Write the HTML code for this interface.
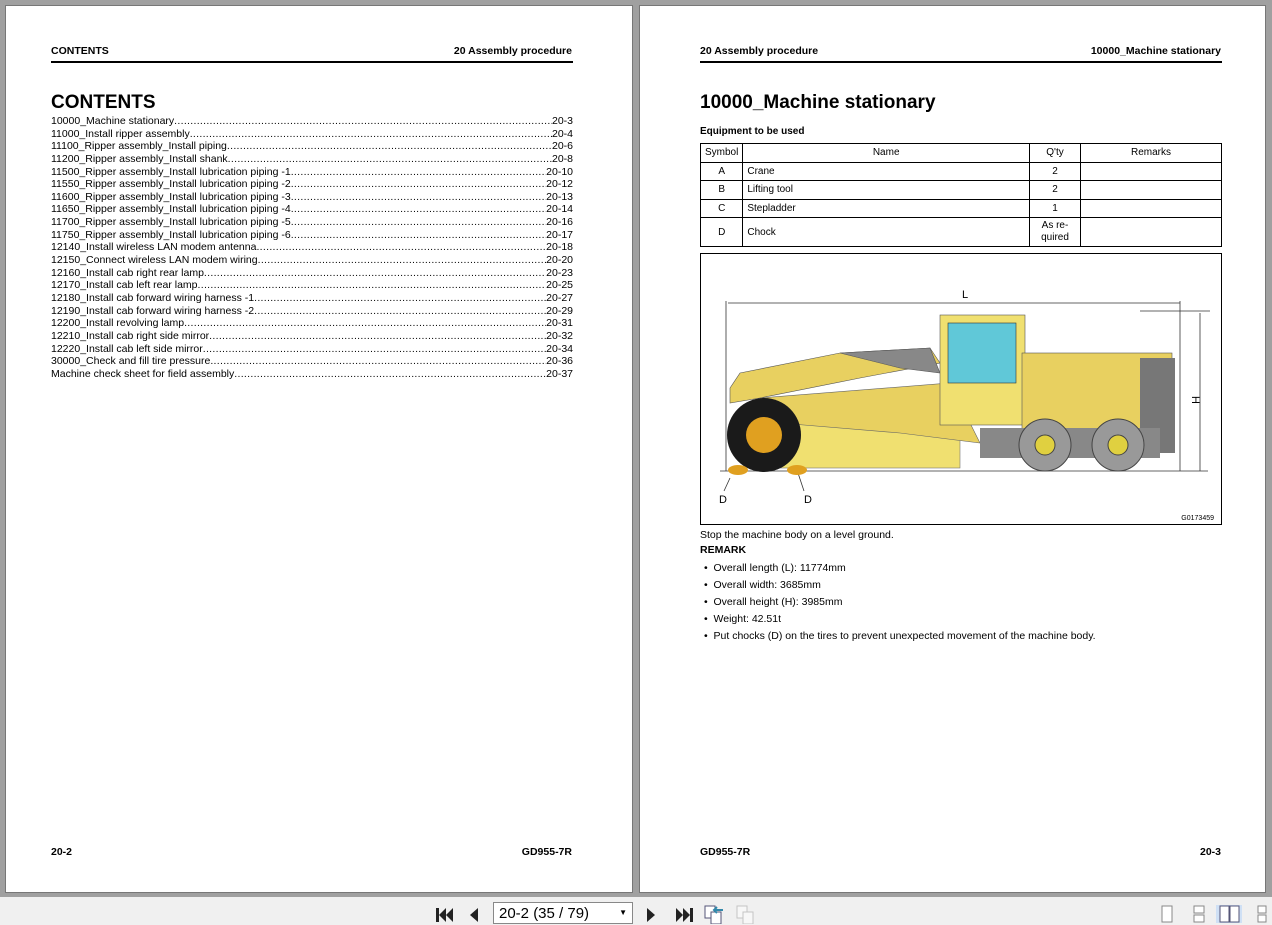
<!DOCTYPE html>
<html><head><style>
*{margin:0;padding:0;box-sizing:border-box}
body{width:1272px;height:925px;background:#a0a0a0;font-family:"Liberation Sans",sans-serif;position:relative;overflow:hidden;color:#000}
.page{position:absolute;top:5px;height:888px;background:#fff;border:1px solid #777}
.hdr{position:absolute;top:39px;font-size:10.5px;font-weight:bold}
.rule{position:absolute;top:55px;height:2px;background:#000}
.toc{position:absolute;left:45px;top:109px;width:522px;font-size:10.5px}
.toc div{display:flex;height:12.65px;line-height:12.65px;white-space:nowrap;overflow:hidden}
.toc .d{flex:1;overflow:hidden;letter-spacing:0.3px}
.toc .d:after{content:"......................................................................................................................................................................................................................................"}
table{border-collapse:collapse;font-size:10px}
td{border:1px solid #000;padding:0 4px;height:18.5px}
.tb{position:absolute;left:0;top:897px;width:1272px;height:28px;background:#f0f0f0}
</style></head><body>
<div class="page" style="left:5px;width:628px">
<div class="hdr" style="left:45px">CONTENTS</div>
<div class="hdr" style="right:60px">20 Assembly procedure</div>
<div class="rule" style="left:45px;width:522px"></div>
<div style="position:absolute;left:45px;top:86px;font-size:19px;font-weight:bold">CONTENTS</div>
<div class="toc">
<div><span>10000_Machine stationary</span><span class="d"></span><span>20-3</span></div>
<div><span>11000_Install ripper assembly</span><span class="d"></span><span>20-4</span></div>
<div><span>11100_Ripper assembly_Install piping </span><span class="d"></span><span>20-6</span></div>
<div><span>11200_Ripper assembly_Install shank</span><span class="d"></span><span>20-8</span></div>
<div><span>11500_Ripper assembly_Install lubrication piping -1 </span><span class="d"></span><span>20-10</span></div>
<div><span>11550_Ripper assembly_Install lubrication piping -2 </span><span class="d"></span><span>20-12</span></div>
<div><span>11600_Ripper assembly_Install lubrication piping -3 </span><span class="d"></span><span>20-13</span></div>
<div><span>11650_Ripper assembly_Install lubrication piping -4 </span><span class="d"></span><span>20-14</span></div>
<div><span>11700_Ripper assembly_Install lubrication piping -5 </span><span class="d"></span><span>20-16</span></div>
<div><span>11750_Ripper assembly_Install lubrication piping -6 </span><span class="d"></span><span>20-17</span></div>
<div><span>12140_Install wireless LAN modem antenna </span><span class="d"></span><span>20-18</span></div>
<div><span>12150_Connect wireless LAN modem wiring </span><span class="d"></span><span>20-20</span></div>
<div><span>12160_Install cab right rear lamp </span><span class="d"></span><span>20-23</span></div>
<div><span>12170_Install cab left rear lamp </span><span class="d"></span><span>20-25</span></div>
<div><span>12180_Install cab forward wiring harness -1 </span><span class="d"></span><span>20-27</span></div>
<div><span>12190_Install cab forward wiring harness -2 </span><span class="d"></span><span>20-29</span></div>
<div><span>12200_Install revolving lamp</span><span class="d"></span><span>20-31</span></div>
<div><span>12210_Install cab right side mirror </span><span class="d"></span><span>20-32</span></div>
<div><span>12220_Install cab left side mirror</span><span class="d"></span><span>20-34</span></div>
<div><span>30000_Check and fill tire pressure </span><span class="d"></span><span>20-36</span></div>
<div><span>Machine check sheet for field assembly</span><span class="d"></span><span>20-37</span></div>
</div>
<div class="hdr" style="left:45px;top:840px">20-2</div>
<div class="hdr" style="right:60px;top:840px">GD955-7R</div>
</div>

<div class="page" style="left:639px;width:627px">
<div class="hdr" style="left:60px">20 Assembly procedure</div>
<div class="hdr" style="right:44px">10000_Machine stationary</div>
<div class="rule" style="left:60px;width:522px"></div>
<div style="position:absolute;left:60px;top:86px;font-size:19px;font-weight:bold">10000_Machine stationary</div>
<div style="position:absolute;left:60px;top:120px;font-size:10px;font-weight:bold">Equipment to be used</div>
<table style="position:absolute;left:60px;top:137px;width:522px">
<tr><td style="width:42px;text-align:center;height:18px">Symbol</td><td style="text-align:center">Name</td><td style="width:51px;text-align:center">Q'ty</td><td style="width:141px;text-align:center">Remarks</td></tr>
<tr><td style="text-align:center">A</td><td>Crane</td><td style="text-align:center">2</td><td></td></tr>
<tr><td style="text-align:center">B</td><td>Lifting tool</td><td style="text-align:center">2</td><td></td></tr>
<tr><td style="text-align:center">C</td><td>Stepladder</td><td style="text-align:center">1</td><td></td></tr>
<tr><td style="text-align:center;height:29px">D</td><td>Chock</td><td style="text-align:center;line-height:12px">As re-<br>quired</td><td></td></tr>
</table>
<svg style="position:absolute;left:60px;top:247px" width="522" height="272" viewBox="0 0 522 272">
<rect x="0.5" y="0.5" width="521" height="271" fill="#fff" stroke="#000"/>
<g stroke="#333" fill="none" stroke-width="0.8">
<line x1="26" y1="48" x2="26" y2="218"/><line x1="28" y1="50" x2="480" y2="50"/><line x1="480" y1="48" x2="480" y2="218"/>
<line x1="440" y1="58" x2="510" y2="58"/><line x1="500" y1="60" x2="500" y2="218"/><line x1="20" y1="218" x2="508" y2="218"/>
<line x1="30" y1="225" x2="24" y2="238"/><line x1="98" y1="220" x2="104" y2="238"/>
</g>
<text x="265" y="45" font-size="11" text-anchor="middle" font-family="Liberation Sans">L</text>
<text x="492" y="143" font-size="11" transform="rotate(90 492 143)" font-family="Liberation Sans">H</text>
<text x="19" y="250" font-size="11" font-family="Liberation Sans">D</text>
<text x="104" y="250" font-size="11" font-family="Liberation Sans">D</text>
<text x="514" y="274" dy="-7" font-size="7" text-anchor="end" font-family="Liberation Sans">G0173459</text>
<polygon points="30,135 40,120 140,100 230,95 240,110 160,125 60,145 30,150" fill="#e8d060" stroke="#555" stroke-width="0.6"/>
<polygon points="140,100 230,95 240,120 200,115" fill="#888" stroke="#555" stroke-width="0.6"/>
<rect x="75" y="170" width="185" height="45" fill="#f0e070" stroke="#777" stroke-width="0.6"/>
<polygon points="60,145 250,130 280,190 200,180 80,170" fill="#e8d060" stroke="#666" stroke-width="0.6"/>
<rect x="240" y="62" width="85" height="110" fill="#f0e070" stroke="#555" stroke-width="0.6"/>
<rect x="248" y="70" width="68" height="60" fill="#60c8d8" stroke="#333" stroke-width="0.6"/>
<rect x="322" y="100" width="150" height="95" fill="#e8d060" stroke="#555" stroke-width="0.6"/>
<rect x="440" y="105" width="35" height="95" fill="#777"/>
<rect x="280" y="175" width="180" height="30" fill="#888"/>
<circle cx="345" cy="192" r="26" fill="#999" stroke="#444"/><circle cx="345" cy="192" r="10" fill="#e0d040" stroke="#444"/>
<circle cx="418" cy="192" r="26" fill="#999" stroke="#444"/><circle cx="418" cy="192" r="10" fill="#e0d040" stroke="#444"/>
<circle cx="64" cy="182" r="37" fill="#1a1a1a"/><circle cx="64" cy="182" r="18" fill="#e0a020"/>
<ellipse cx="38" cy="217" rx="10" ry="5" fill="#e0a020"/><ellipse cx="97" cy="217" rx="10" ry="5" fill="#e0a020"/>
</svg>
<div style="position:absolute;left:60px;top:523px;font-size:10.5px">Stop the machine body on a level ground.</div>
<div style="position:absolute;left:60px;top:538px;font-size:10.5px;font-weight:bold">REMARK</div>
<div style="position:absolute;left:64px;top:554px;font-size:10.5px;line-height:17px">
<div>•&nbsp;&nbsp;Overall length (L): 11774mm</div>
<div>•&nbsp;&nbsp;Overall width: 3685mm</div>
<div>•&nbsp;&nbsp;Overall height (H): 3985mm</div>
<div>•&nbsp;&nbsp;Weight: 42.51t</div>
<div>•&nbsp;&nbsp;Put chocks (D) on the tires to prevent unexpected movement of the machine body.</div>
</div>
<div class="hdr" style="left:60px;top:840px">GD955-7R</div>
<div class="hdr" style="right:44px;top:840px">20-3</div>
</div>

<div class="tb">
<svg style="position:absolute;left:436px;top:10px" width="20" height="16"><rect x="0" y="1" width="3" height="14" fill="#222"/><polygon points="10,1 3,8 10,15" fill="#222"/><polygon points="17,1 10,8 17,15" fill="#222"/></svg>
<svg style="position:absolute;left:468px;top:10px" width="12" height="16"><polygon points="10,1 2,8 10,15" fill="#222"/></svg>
<div style="position:absolute;left:493px;top:5px;width:140px;height:22px;background:#fff;border:1px solid #888;font-size:15px;padding:2px 5px">20-2 (35 / 79)<span style="position:absolute;right:5px;top:5px;font-size:8px">▼</span></div>
<svg style="position:absolute;left:645px;top:10px" width="12" height="16"><polygon points="2,1 10,8 2,15" fill="#222"/></svg>
<svg style="position:absolute;left:673px;top:10px" width="20" height="16"><polygon points="3,1 10,8 3,15" fill="#222"/><polygon points="10,1 17,8 10,15" fill="#222"/><rect x="17" y="1" width="3" height="14" fill="#222"/></svg>
<svg style="position:absolute;left:703px;top:7px" width="22" height="20"><rect x="2" y="2" width="10" height="12" fill="#fff" stroke="#557"/><rect x="8" y="8" width="10" height="12" fill="#fff" stroke="#557"/><path d="M12 6h8M14 3l-3 3 3 3" stroke="#38a" fill="none" stroke-width="2"/></svg>
<svg style="position:absolute;left:735px;top:7px" width="22" height="20" opacity="0.5"><rect x="2" y="2" width="10" height="12" fill="#fff" stroke="#999"/><rect x="8" y="8" width="10" height="12" fill="#fff" stroke="#999"/></svg>
<svg style="position:absolute;left:1160px;top:8px" width="112" height="18">
<rect x="2" y="1" width="10" height="16" fill="#fff" stroke="#888"/>
<rect x="34" y="1" width="10" height="7" fill="#fff" stroke="#888"/><rect x="34" y="10" width="10" height="7" fill="#fff" stroke="#888"/>
<rect x="56" y="-2" width="26" height="22" fill="#cfe0f5"/>
<rect x="60" y="1" width="9" height="16" fill="#fff" stroke="#557"/><rect x="70" y="1" width="9" height="16" fill="#fff" stroke="#557"/>
<rect x="98" y="1" width="8" height="7" fill="#fff" stroke="#888"/><rect x="98" y="10" width="8" height="7" fill="#fff" stroke="#888"/>
</svg>
</div>
</body></html>
